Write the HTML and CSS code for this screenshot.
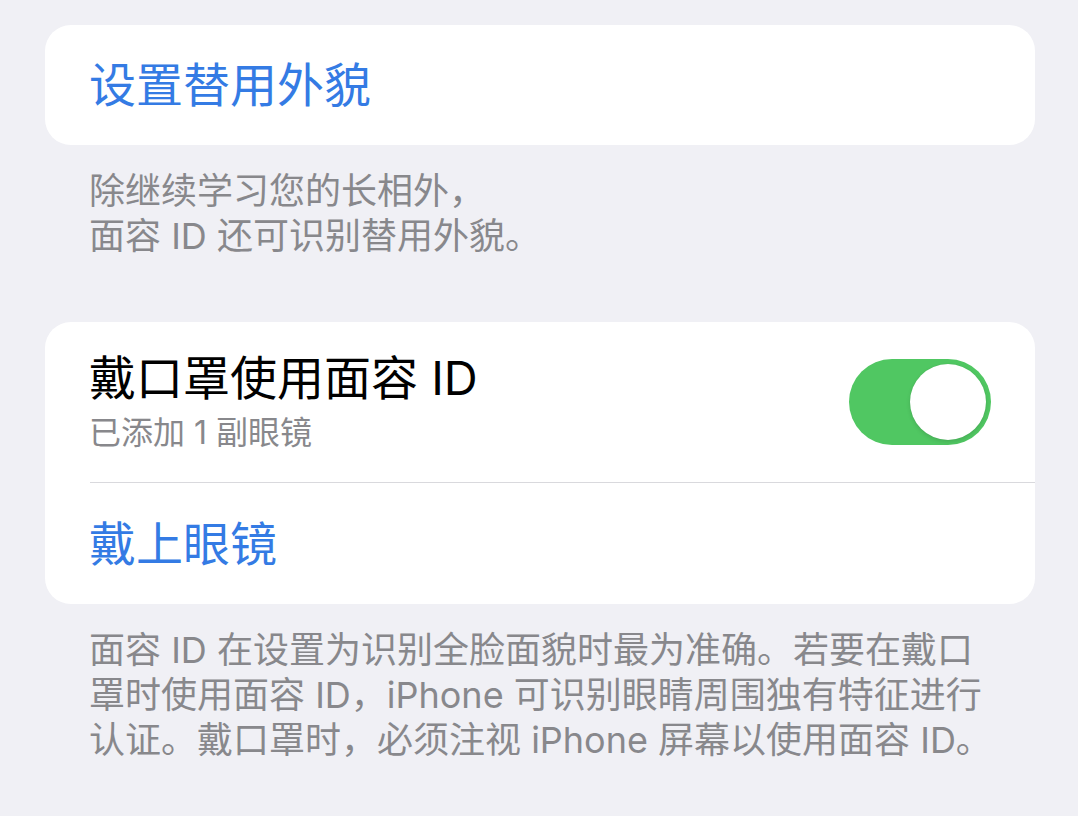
FILE: index.html
```html
<!DOCTYPE html>
<html lang="zh-CN">
<head>
    <meta charset="UTF-8">
    <meta name="viewport" content="width=device-width, initial-scale=1.0">
    <title>面容 ID 与密码</title>
    <link rel="stylesheet" href="styles.css">
</head>
<body>
    <div class="settings">
        <div class="group">
            <div class="cell cell-action">
                <span class="action-label">设置替用外貌</span>
            </div>
        </div>
        <p class="footnote">除继续学习您的长相外，<br>面容 ID 还可识别替用外貌。</p>

        <div class="group group-mask">
            <div class="cell cell-toggle">
                <div class="cell-text">
                    <div class="cell-title">戴口罩使用面容 ID</div>
                    <div class="cell-subtitle">已添加 1 副眼镜</div>
                </div>
                <div class="switch is-on" role="switch" aria-checked="true">
                    <div class="switch-knob"></div>
                </div>
            </div>
            <div class="divider"></div>
            <div class="cell cell-action cell-glasses">
                <span class="action-label">戴上眼镜</span>
            </div>
        </div>
        <p class="footnote">面容 ID 在设置为识别全脸面貌时最为准确。若要在戴口<br>罩时使用面容 ID，iPhone 可识别眼睛周围独有特征进行<br>认证。戴口罩时，必须注视 iPhone 屏幕以使用面容 ID。</p>
    </div>
</body>
</html>
```

FILE: styles.css
```css
:root {
    --bg-color: #f0f0f5;
    --card-color: #ffffff;
    --tint-color: #347be4;
    --label-color: #000000;
    --secondary-label: #88888c;
    --separator-color: #d9d9dd;
    --switch-on: #50c762;
}

body {
    margin: 0;
    padding: 0;
    background-color: var(--bg-color);
    font-family: Inter, "Noto Sans CJK SC", sans-serif;
    color: var(--label-color);
    height: 100vh;
    overflow: hidden;
}

.settings {
    padding: 25px 43px 0 45px;
}

.group {
    background-color: var(--card-color);
    border-radius: 26px;
    overflow: hidden;
}

.cell {
    display: flex;
    align-items: center;
    padding-left: 44px;
}

.cell-action {
    height: 120px;
}

.action-label {
    font-size: 47px;
    line-height: 56px;
    color: var(--tint-color);
}

.footnote {
    margin: 0;
    padding: 24px 0 0 44px;
    font-size: 36px;
    line-height: 45px;
    color: var(--secondary-label);
    white-space: nowrap;
}

.group-mask {
    margin-top: 63px;
}

.cell-toggle {
    justify-content: space-between;
    padding: 28px 44px 29px 44px;
}

.cell-title {
    font-size: 47px;
    line-height: 56px;
}

.cell-subtitle {
    margin-top: 7px;
    font-size: 32px;
    line-height: 40px;
    color: var(--secondary-label);
}

.switch {
    width: 142px;
    height: 86px;
    border-radius: 43px;
    background-color: var(--switch-on);
    display: flex;
    align-items: center;
    justify-content: flex-end;
    padding: 0 5px;
    box-sizing: border-box;
}

.switch-knob {
    width: 76px;
    height: 76px;
    border-radius: 50%;
    background-color: #ffffff;
    box-shadow: 0 2px 4px rgba(0, 0, 0, 0.12), 0 0 1px rgba(0, 0, 0, 0.1);
}

.divider {
    height: 1px;
    margin-left: 45px;
    background-color: var(--separator-color);
}

.cell-glasses {
    height: 121px;
}
```
